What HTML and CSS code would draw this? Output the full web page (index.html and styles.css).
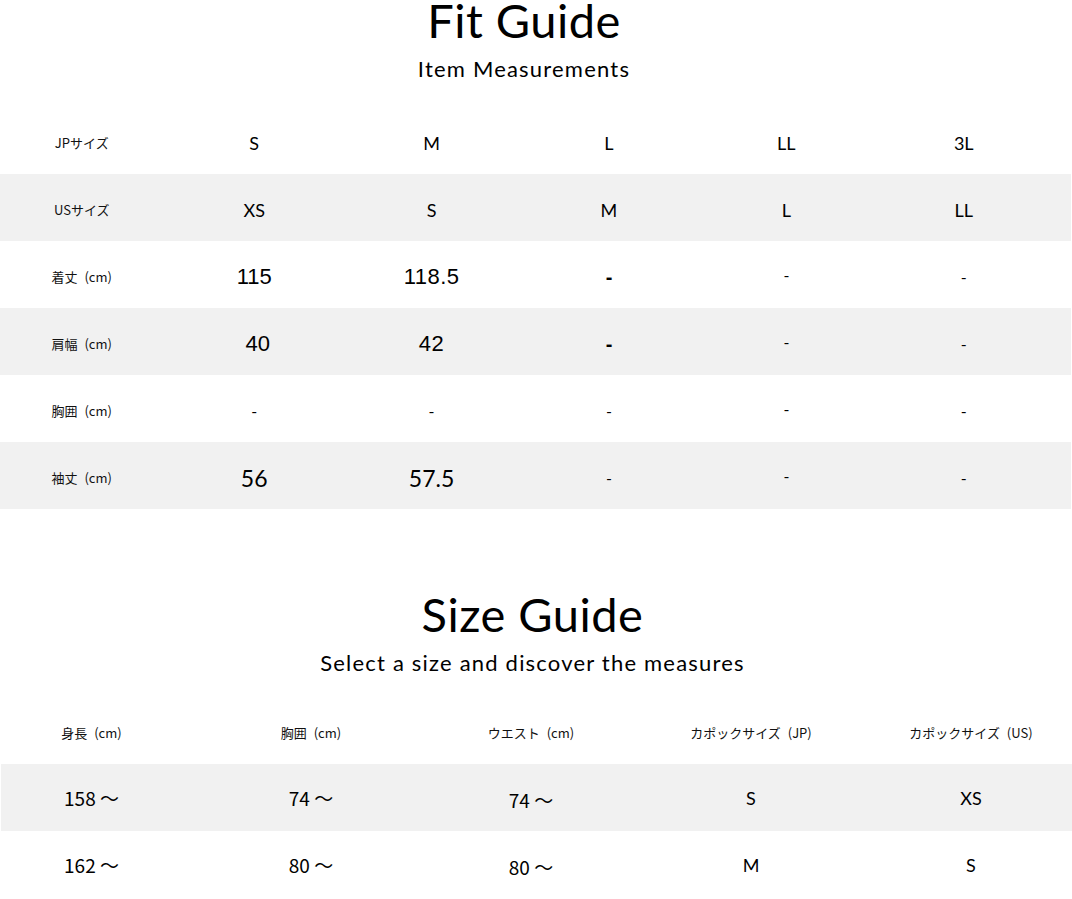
FILE: index.html
```html
<!DOCTYPE html>
<html lang="ja">
<head>
<meta charset="utf-8">
<title>Fit Guide</title>
<link rel="stylesheet" href="styles.css">
</head>
<body>
<section class="guide fit">
  <h1 class="title">Fit Guide</h1>
  <p class="subtitle">Item Measurements</p>
  <div class="fit-table">
    <div class="fit-row">
      <div class="label">JPサイズ</div>
      <div class="size">S</div><div class="size">M</div><div class="size">L</div><div class="size">LL</div><div class="size">3L</div>
    </div>
    <div class="fit-row alt">
      <div class="label">USサイズ</div>
      <div class="size">XS</div><div class="size">S</div><div class="size">M</div><div class="size">L</div><div class="size">LL</div>
    </div>
    <div class="fit-row">
      <div class="label">着丈 (cm)</div>
      <div class="num">115</div><div class="num narrow">118.5</div><div class="dash-bold">-</div><div class="dash hi">-</div><div class="dash">-</div>
    </div>
    <div class="fit-row alt">
      <div class="label">肩幅 (cm)</div>
      <div class="num shift">40</div><div class="num narrow">42</div><div class="dash-bold">-</div><div class="dash hi">-</div><div class="dash">-</div>
    </div>
    <div class="fit-row">
      <div class="label">胸囲 (cm)</div>
      <div class="dash">-</div><div class="dash">-</div><div class="dash">-</div><div class="dash hi">-</div><div class="dash">-</div>
    </div>
    <div class="fit-row alt">
      <div class="label">袖丈 (cm)</div>
      <div class="num-light">56</div><div class="num-light">57.5</div><div class="dash">-</div><div class="dash hi">-</div><div class="dash">-</div>
    </div>
  </div>
</section>

<section class="guide size-guide">
  <h2 class="title">Size Guide</h2>
  <p class="subtitle">Select a size and discover the measures</p>
  <div class="size-table">
    <div class="size-row head">
      <div class="label">身長 (cm)</div>
      <div class="label">胸囲 (cm)</div>
      <div class="label">ウエスト (cm)</div>
      <div class="label">カポックサイズ (JP)</div>
      <div class="label">カポックサイズ (US)</div>
    </div>
    <div class="size-row alt">
      <div class="range">158 〜</div>
      <div class="range">74 〜</div>
      <div class="range low">74 〜</div>
      <div class="size">S</div>
      <div class="size">XS</div>
    </div>
    <div class="size-row">
      <div class="range">162 〜</div>
      <div class="range">80 〜</div>
      <div class="range low">80 〜</div>
      <div class="size">M</div>
      <div class="size">S</div>
    </div>
  </div>
</section>
</body>
</html>
```

FILE: styles.css
```css
* { box-sizing: border-box; }

body {
  margin: 0;
  background: #fff;
  color: #000;
  font-family: Lato, "Noto Sans", sans-serif;
  width: 1072px;
  overflow: hidden;
}

.guide {
  text-align: center;
}

.title {
  margin: 0;
  font-family: Lato, "Noto Sans", sans-serif;
  font-weight: 400;
  font-size: 47px;
  line-height: 40px;
  letter-spacing: 0.5px;
}

.subtitle {
  margin: 17px 0 0;
  font-size: 22px;
  line-height: 24px;
  letter-spacing: 1.2px;
}

.fit .title,
.fit .subtitle {
  padding-right: 24px;
}

.size-guide .title,
.size-guide .subtitle {
  padding-right: 7px;
}

.fit .subtitle {
  margin-bottom: 26px;
}

.fit-table {
  width: 1071px;
}

.fit-row {
  display: grid;
  grid-template-columns: 165.5px repeat(5, 177.4px);
  height: 67px;
  align-items: center;
  justify-items: center;
  padding-top: 4px;
}

.fit-row > :first-child {
  padding-right: 2px;
}

.alt {
  background: #f1f1f1;
}

.label {
  font-family: "Noto Sans CJK JP", sans-serif;
  font-weight: 400;
  font-size: 13px;
  line-height: 16px;
  letter-spacing: 0;
  word-spacing: 4px;
  color: #111;
}

.size {
  font-family: Lato, "Noto Sans", sans-serif;
  font-size: 18px;
  line-height: 20px;
}

.num {
  font-family: "Liberation Sans", Arial, sans-serif;
  font-size: 22px;
  line-height: 24px;
}

.num.narrow {
  letter-spacing: 0.5px;
}

.num.shift {
  padding-left: 7px;
}

.num-light {
  font-family: Lato, "Noto Sans", sans-serif;
  font-size: 23px;
  line-height: 24px;
}

.dash {
  font-family: Lato, sans-serif;
  font-size: 16px;
  line-height: 20px;
}

.dash.hi {
  margin-top: -4px;
}

.dash-bold {
  font-family: "Liberation Sans", Arial, sans-serif;
  font-weight: 700;
  font-size: 20px;
  line-height: 24px;
}

.size-guide {
  margin-top: 85px;
}

.size-guide .subtitle {
  margin-bottom: 22px;
}

.size-table {
  margin-left: 1px;
  width: 1071px;
}

.size-row {
  display: grid;
  grid-template-columns: 200px repeat(3, 220px) 211px;
  height: 67px;
  align-items: center;
  justify-items: center;
}

.size-row.head {
  padding-top: 5px;
}

.size-row > :first-child {
  padding-right: 19px;
}

.size-row > :last-child {
  padding-left: 9px;
}

.range {
  font-family: "Noto Sans CJK JP", sans-serif;
  font-size: 19px;
  line-height: 24px;
}

.range.low {
  margin-top: 4px;
}
```
